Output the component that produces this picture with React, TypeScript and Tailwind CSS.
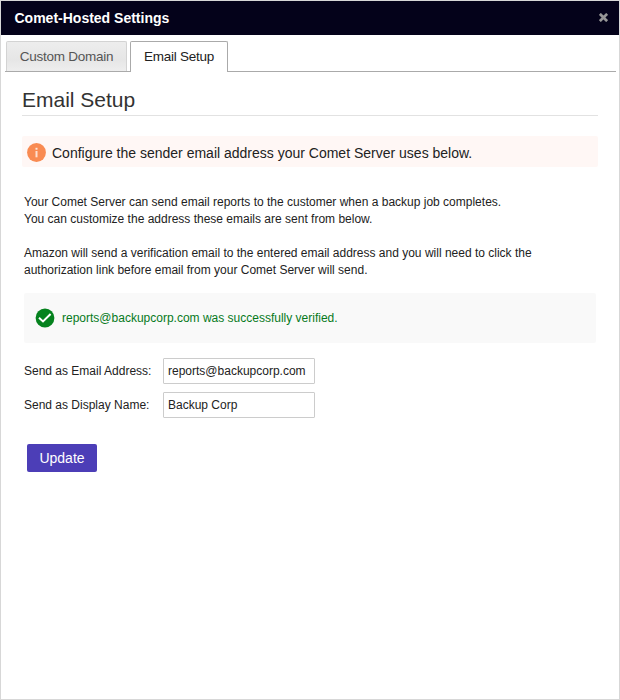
const tabBase = 'flex items-center justify-center rounded-t-[2px] border border-b-0 text-[13.5px] tracking-[-0.25px]';

function InfoIcon() {
  return (
    <svg width="19" height="19" viewBox="0 0 19 19" className="shrink-0">
      <circle cx="9.5" cy="9.5" r="9.4" fill="#f98b52" />
      <rect x="8.5" y="4.8" width="2" height="1.9" fill="#fde8dc" />
      <rect x="8.5" y="8" width="2" height="6.3" fill="#fde0d0" />
    </svg>
  );
}

function SuccessIcon() {
  return (
    <svg width="20" height="20" viewBox="0 0 20 20" className="shrink-0">
      <circle cx="10" cy="10" r="9.4" fill="#05821e" />
      <path d="M4 9.8 L8 13.4 L15.6 6" fill="none" stroke="#ffffff" strokeWidth="2" />
    </svg>
  );
}

function CloseIcon() {
  return (
    <svg width="9" height="9" viewBox="0 0 9 9">
      <path d="M1.8 1.8 L7.2 7.2 M7.2 1.8 L1.8 7.2" stroke="#969696" strokeWidth="2.7" strokeLinecap="square" />
    </svg>
  );
}

function Field({ label, value }: { label: string; value: string }) {
  return (
    <label className="flex h-[26px] items-center">
      <span className="w-[139px] whitespace-nowrap">{label}</span>
      <input
        defaultValue={value}
        className="h-[26px] w-[152px] rounded-[1px] border border-[#cccccc] bg-white px-1 text-[12px] text-[#222222] outline-none"
      />
    </label>
  );
}

export default function App() {
  return (
    <div className="h-[700px] w-[620px] border border-[#d7d7d7] bg-white font-['Liberation_Sans',Arial,sans-serif] text-[12px] leading-[17px] text-[#222222]">
      <header className="flex h-[34px] items-center justify-between bg-[#04021a] pr-[11px] pl-[13.5px]">
        <h1 className="text-[14px] font-bold text-white">Comet-Hosted Settings</h1>
        <button aria-label="Close" className="mb-px">
          <CloseIcon />
        </button>
      </header>
      <nav className="mt-[6px] ml-1 flex h-[31px] w-[611px] items-end">
        <div className="h-full w-px border-b border-[#aaaaaa]" />
        <div className="h-full w-[121px] border-b border-[#aaaaaa]">
          <button className={`${tabBase} h-full w-full border-[#d3d3d3] bg-linear-to-b from-[#ededed] via-[#e6e6e6] via-60% to-[#eeeeee] text-[#555555]`}>
            Custom Domain
          </button>
        </div>
        <div className="h-full w-[3px] border-b border-[#aaaaaa]" />
        <button className={`${tabBase} h-full w-[98px] border-[#aaaaaa] bg-white pb-px text-[#212121]`}>Email Setup</button>
        <div className="h-full flex-1 border-b border-[#aaaaaa]" />
      </nav>
      <main className="mr-[21px] ml-[21px]">
        <h2 className="mt-[14px] h-[30px] border-b border-[#e2e2e2] text-[21px] leading-[28px] text-[#333333]">Email Setup</h2>
        <div className="mt-5 flex h-[31px] items-center gap-[6px] rounded-[2px] bg-[#fff7f5] pt-[2px] pl-[5px] text-[14px]">
          <InfoIcon />
          <span className="pt-px">Configure the sender email address your Comet Server uses below.</span>
        </div>
        <div className="mx-[2px]">
          <p className="mt-[27px]">
            Your Comet Server can send email reports to the customer when a backup job completes.
            <br />
            You can customize the address these emails are sent from below.
          </p>
          <p className="mt-[17px]">
            Amazon will send a verification email to the entered email address and you will need to click the
            <br />
            authorization link before email from your Comet Server will send.
          </p>
          <div className="mt-[14px] flex h-[50px] items-center gap-[7px] rounded-[2px] bg-[#f9f9f9] pl-[11px] text-[#077a1c]">
            <SuccessIcon />
            <span>reports@backupcorp.com was successfully verified.</span>
          </div>
          <form className="mt-[15px] flex flex-col gap-2">
            <Field label="Send as Email Address:" value="reports@backupcorp.com" />
            <Field label="Send as Display Name:" value="Backup Corp" />
          </form>
          <button className="mt-[26px] ml-[3px] h-7 w-[70px] rounded-[2px] bg-[#4c3eb7] text-[14px] text-white">Update</button>
        </div>
      </main>
    </div>
  );
}
